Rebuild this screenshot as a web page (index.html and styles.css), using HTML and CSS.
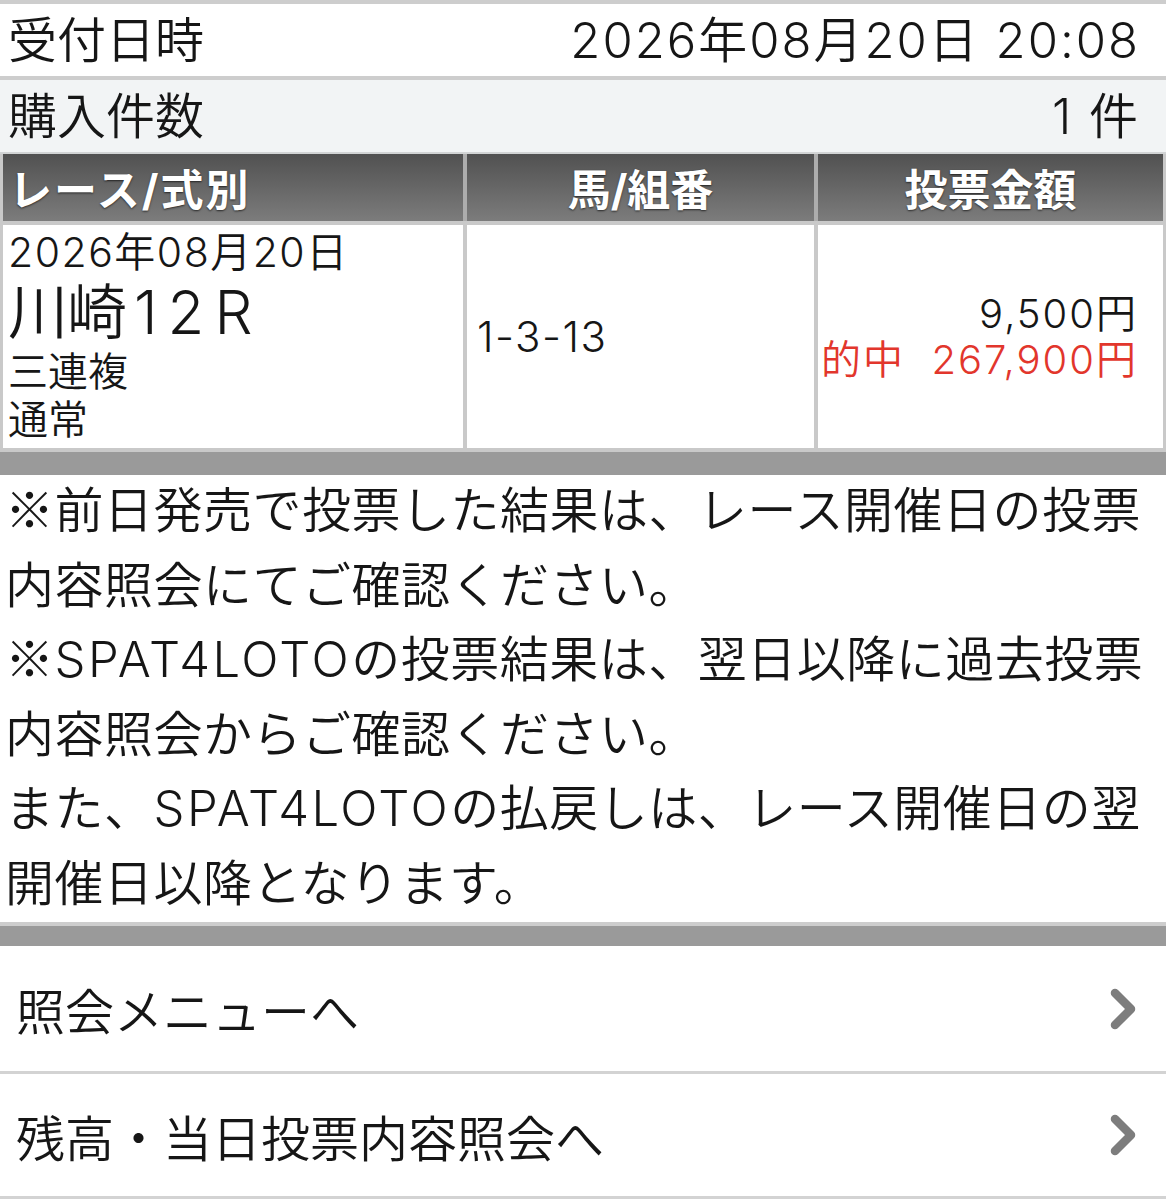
FILE: index.html
```html
<!DOCTYPE html>
<html lang="ja">
<head>
<meta charset="utf-8">
<title>投票内容照会</title>
<link rel="stylesheet" href="styles.css">
</head>
<body>
<div class="page">
  <div class="topband"></div>
  <div class="info-row">
    <span class="label">受付日時</span>
    <span class="value">2026年08月20日 20:08</span>
  </div>
  <div class="info-row alt">
    <span class="label">購入件数</span>
    <span class="value">1 件</span>
  </div>

  <div class="table">
    <div class="thead">
      <div class="th th-left">レース/式別</div>
      <div class="th">馬/組番</div>
      <div class="th th-last">投票金額</div>
    </div>
    <div class="tbody">
      <div class="td race">
        <div class="race-date">2026年08月20日</div>
        <div class="race-name">川崎<span class="race-no">12R</span></div>
        <div class="race-type">三連複</div>
        <div class="race-type">通常</div>
      </div>
      <div class="td combo">1-3-13</div>
      <div class="td amount">
        <div class="amount-bet">9,500円</div>
        <div class="amount-hit">的中&nbsp;&nbsp;267,900円</div>
      </div>
    </div>
  </div>
  <div class="band"></div>

  <div class="notes">
    <div class="note-line">※前日発売で投票した結果は、レース開催日の投票</div>
    <div class="note-line">内容照会にてご確認ください。</div>
    <div class="note-line">※<span class="lat">SPAT4LOTO</span>の投票結果は、翌日以降に過去投票</div>
    <div class="note-line">内容照会からご確認ください。</div>
    <div class="note-line">また、<span class="lat">SPAT4LOTO</span>の払戻しは、レース開催日の翌</div>
    <div class="note-line">開催日以降となります。</div>
  </div>
  <div class="band band-bottom"></div>

  <a class="menu-item" href="#">
    <span>照会メニューへ</span>
    <svg class="chev" width="28" height="44" viewBox="0 0 28 44"><polyline points="6,6 22,22 6,38" fill="none" stroke="#7d7d7d" stroke-width="8.5" stroke-linecap="round" stroke-linejoin="round"/></svg>
  </a>
  <a class="menu-item last" href="#">
    <span>残高・当日投票内容照会へ</span>
    <svg class="chev" width="28" height="44" viewBox="0 0 28 44"><polyline points="6,6 22,22 6,38" fill="none" stroke="#7d7d7d" stroke-width="8.5" stroke-linecap="round" stroke-linejoin="round"/></svg>
  </a>
</div>
</body>
</html>
```

FILE: styles.css
```css
* { box-sizing: border-box; }
html, body { margin: 0; padding: 0; background: #ffffff; }
body {
  font-family: Inter, "Noto Sans CJK JP", sans-serif;
  font-weight: 350;
  color: #161616;
}
.page { width: 1166px; }

.topband { height: 4px; background: #cdcdcd; }

.info-row {
  height: 76px;
  display: flex;
  justify-content: space-between;
  align-items: center;
  padding: 0 28px 0 8px;
  font-size: 49px;
  line-height: 1;
  background: #ffffff;
  border-bottom: 4px solid #cdcdcd;
}
.info-row .value { letter-spacing: 2px; margin-right: -2px; }
.info-row.alt {
  background: #f2f4f5;
  height: 74px;
  border-bottom: 2px solid #d2d4d5;
}

.table {
  border-left: 3px solid #c9c9c9;
  border-right: 3px solid #c9c9c9;
}
.thead, .tbody {
  display: grid;
  grid-template-columns: 464px 351px 1fr;
}
.thead {
  height: 71px;
  background: linear-gradient(#515151, #7c7c7c);
  border-bottom: 4px solid #c9c9c9;
}
.th {
  display: flex;
  align-items: center;
  justify-content: center;
  color: #ffffff;
  font-weight: 700;
  font-size: 43px;
  text-shadow: 0 1px 2px rgba(0, 0, 0, 0.65);
  border-right: 4px solid #adadad;
  padding-bottom: 2px;
}
.th-left { justify-content: flex-start; padding-left: 6px; letter-spacing: 2px; }
.th-last { border-right: none; }

.tbody {
  height: 227px;
  border-bottom: 4px solid #c9c9c9;
}
.td {
  border-right: 4px solid #c9c9c9;
}
.race {
  padding: 3px 0 0 5px;
}
.race-date { font-size: 41px; line-height: 48px; letter-spacing: 1.5px; }
.race-name { font-size: 60px; line-height: 72px; letter-spacing: -1px; }
.race-no { letter-spacing: 10px; margin-left: 8px; }
.race-type { font-size: 40px; line-height: 48px; }

.combo {
  display: flex;
  align-items: center;
  padding-left: 10px;
  font-size: 42px;
  letter-spacing: 1.5px;
}
.amount {
  border-right: none;
  display: flex;
  flex-direction: column;
  justify-content: center;
  align-items: flex-end;
  padding-right: 25px;
  white-space: nowrap;
  font-size: 40px;
  line-height: 46px;
  letter-spacing: 2px;
}
.amount-hit { color: #e2362c; }

.band {
  height: 23px;
  background: #9a9a9a;
}

.notes {
  font-family: "Noto Sans CJK JP", sans-serif;
  font-size: 49px;
  letter-spacing: 0.5px;
  padding: 0 0 0 5px;
  white-space: nowrap;
  border-bottom: 4px solid #cdcdcd;
}
.note-line {
  height: 74.5px;
  line-height: 64px;
}
.lat { font-family: Inter, sans-serif; letter-spacing: 2.5px; }
.band-bottom { height: 20px; }

.menu-item {
  display: flex;
  align-items: center;
  justify-content: space-between;
  height: 128px;
  padding: 0 29px 0 16px;
  font-size: 49px;
  color: #161616;
  text-decoration: none;
  border-bottom: 3px solid #d3d3d3;
}
.menu-item.last { height: 125px; }
.chev { display: block; }
```
